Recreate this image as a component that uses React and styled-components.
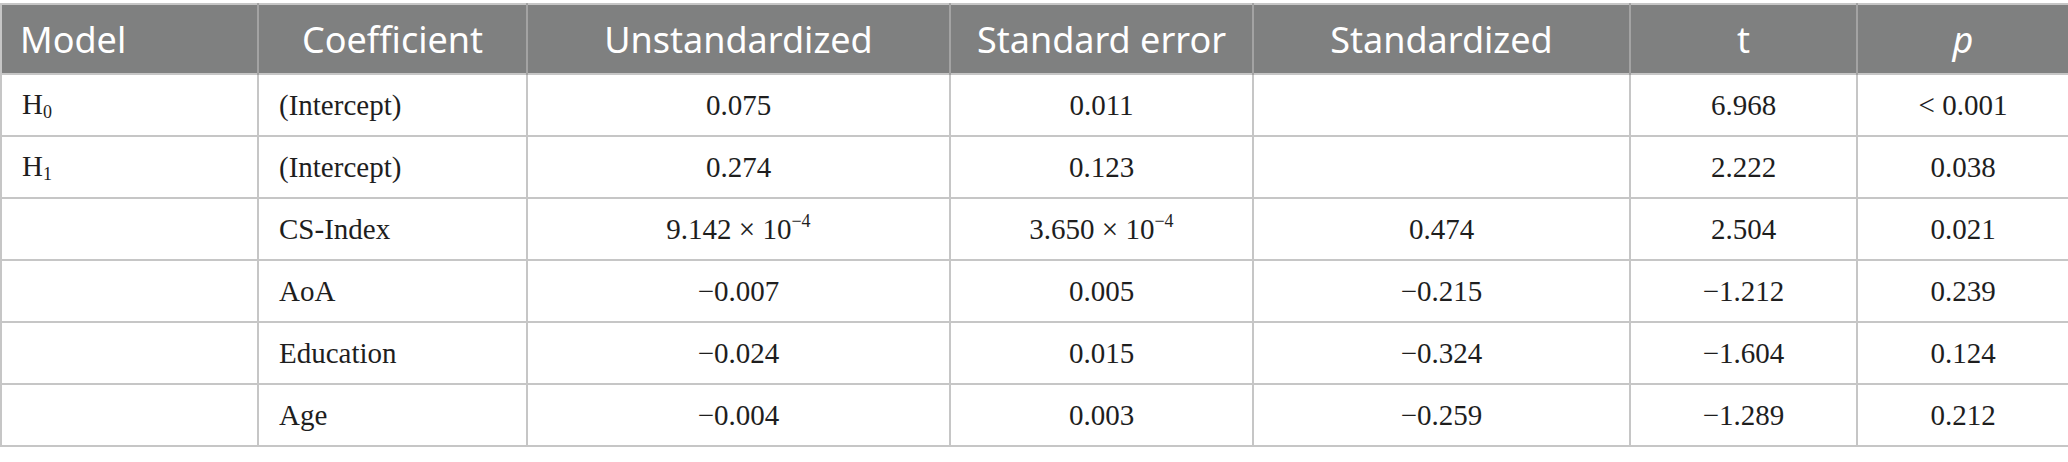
import React from "react";
import styled, { createGlobalStyle } from "styled-components";

const GlobalStyle = createGlobalStyle`
  html, body {
    margin: 0;
    padding: 0;
    background: #ffffff;
  }
  body {
    padding-top: 3px;
  }
`;

const Table = styled.table`
  width: 2068px;
  border-collapse: collapse;
  table-layout: fixed;
  border: 2px solid #c6c6c6;
`;

const HeadRow = styled.tr`
  height: 70px;
  background: #7f8080;
`;

const HeadCell = styled.th`
  font-family: "Noto Sans", "Open Sans", sans-serif;
  font-size: 36px;
  font-weight: 400;
  color: #ffffff;
  text-align: ${(p) => (p.$left ? "left" : "center")};
  padding: 0 ${(p) => (p.$left ? "18px" : "8px")};
  border-left: 2px solid #a3a3a3;
  white-space: nowrap;

  &:first-child {
    border-left: none;
  }

  em {
    font-style: italic;
  }
`;

const Row = styled.tr`
  height: 62px;
`;

const Cell = styled.td`
  font-family: "Liberation Serif", "Times New Roman", serif;
  font-size: 29px;
  color: #1e1e1e;
  text-align: ${(p) => p.$align || "center"};
  padding: 0 ${(p) => (p.$align === "left" ? "20px" : "8px")};
  border: 2px solid #c6c6c6;
  white-space: nowrap;

  sub {
    font-size: 18px;
    vertical-align: -4px;
  }

  sup {
    font-size: 18px;
    vertical-align: 12px;
    line-height: 0;
  }
`;

const widths = [257, 269, 423, 303, 377, 227, 212];

const rows = [
  { model: ["H", "0"], coef: "(Intercept)", u: "0.075", se: "0.011", s: "", t: "6.968", p: "< 0.001" },
  { model: ["H", "1"], coef: "(Intercept)", u: "0.274", se: "0.123", s: "", t: "2.222", p: "0.038" },
  { coef: "CS-Index", u: ["9.142", "−4"], se: ["3.650", "−4"], s: "0.474", t: "2.504", p: "0.021" },
  { coef: "AoA", u: "−0.007", se: "0.005", s: "−0.215", t: "−1.212", p: "0.239" },
  { coef: "Education", u: "−0.024", se: "0.015", s: "−0.324", t: "−1.604", p: "0.124" },
  { coef: "Age", u: "−0.004", se: "0.003", s: "−0.259", t: "−1.289", p: "0.212" },
];

const Sci = ({ value }) =>
  Array.isArray(value) ? (
    <>
      {value[0]} × 10<sup>{value[1]}</sup>
    </>
  ) : (
    value
  );

export default function App() {
  return (
    <>
      <GlobalStyle />
      <Table>
        <colgroup>
          {widths.map((w, i) => (
            <col key={i} style={{ width: w }} />
          ))}
        </colgroup>
        <thead>
          <HeadRow>
            <HeadCell $left>Model</HeadCell>
            <HeadCell>Coefficient</HeadCell>
            <HeadCell>Unstandardized</HeadCell>
            <HeadCell>Standard error</HeadCell>
            <HeadCell>Standardized</HeadCell>
            <HeadCell>t</HeadCell>
            <HeadCell>
              <em>p</em>
            </HeadCell>
          </HeadRow>
        </thead>
        <tbody>
          {rows.map((r, i) => (
            <Row key={i}>
              <Cell $align="left">
                {r.model && (
                  <>
                    {r.model[0]}
                    <sub>{r.model[1]}</sub>
                  </>
                )}
              </Cell>
              <Cell $align="left">{r.coef}</Cell>
              <Cell>
                <Sci value={r.u} />
              </Cell>
              <Cell>
                <Sci value={r.se} />
              </Cell>
              <Cell>{r.s}</Cell>
              <Cell>{r.t}</Cell>
              <Cell>{r.p}</Cell>
            </Row>
          ))}
        </tbody>
      </Table>
    </>
  );
}
